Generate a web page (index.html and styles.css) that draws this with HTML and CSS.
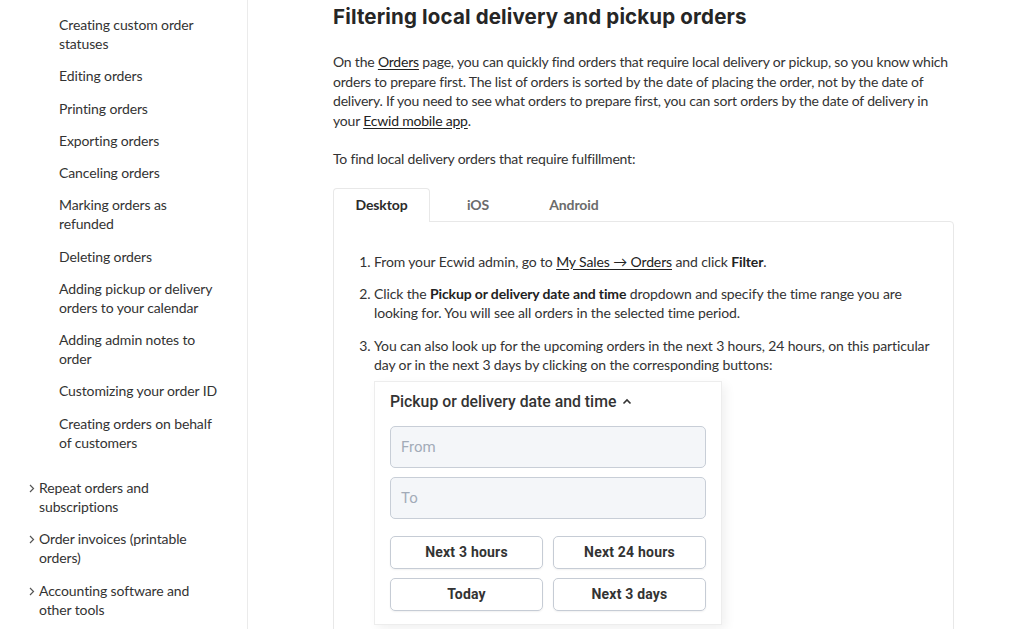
FILE: index.html
```html
<!DOCTYPE html>
<html>
<head>
<meta charset="utf-8">
<link rel="stylesheet" href="styles.css">
</head>
<body>
<div class="page">
  <aside class="sidebar">
    <ul class="sub">
      <li>Creating custom order statuses</li>
      <li>Editing orders</li>
      <li>Printing orders</li>
      <li>Exporting orders</li>
      <li>Canceling orders</li>
      <li>Marking orders as refunded</li>
      <li>Deleting orders</li>
      <li>Adding pickup or delivery orders to your calendar</li>
      <li>Adding admin notes to order</li>
      <li>Customizing your order ID</li>
      <li>Creating orders on behalf of customers</li>
    </ul>
    <ul class="top">
      <li><svg class="chev" width="6" height="9" viewBox="0 0 6 9"><path d="M1 1l3.5 3.5L1 8" fill="none" stroke="#555" stroke-width="1.2"/></svg><span>Repeat orders and subscriptions</span></li>
      <li><svg class="chev" width="6" height="9" viewBox="0 0 6 9"><path d="M1 1l3.5 3.5L1 8" fill="none" stroke="#555" stroke-width="1.2"/></svg><span>Order invoices (printable orders)</span></li>
      <li><svg class="chev" width="6" height="9" viewBox="0 0 6 9"><path d="M1 1l3.5 3.5L1 8" fill="none" stroke="#555" stroke-width="1.2"/></svg><span>Accounting software and other tools</span></li>
    </ul>
  </aside>
  <main class="main">
    <h2 class="title">Filtering local delivery and pickup orders</h2>
    <p class="para">On the <a class="link">Orders</a> page, you can quickly find orders that require local delivery or pickup, so you know which orders to prepare first. The list of orders is sorted by the date of placing the order, not by the date of delivery. If you need to see what orders to prepare first, you can sort orders by the date of delivery in your <a class="link">Ecwid mobile app</a>.</p>
    <p class="para">To find local delivery orders that require fulfillment:</p>
    <div class="tabs">
      <div class="tab active">Desktop</div>
      <div class="tab">iOS</div>
      <div class="tab">Android</div>
    </div>
    <div class="tabbox">
      <ol class="steps">
        <li>From your Ecwid admin, go to <a class="link">My Sales → Orders</a> and click <b>Filter</b>.</li>
        <li>Click the <b>Pickup or delivery date and time</b> dropdown and specify the time range you are looking for. You will see all orders in the selected time period.</li>
        <li>You can also look up for the upcoming orders in the next 3 hours, 24 hours, on this particular day or in the next 3 days by clicking on the corresponding buttons:
          <div class="shot">
            <div class="shot-head">Pickup or delivery date and time <svg width="10" height="7" viewBox="0 0 10 7"><path d="M1.5 5.5L5 2l3.5 3.5" fill="none" stroke="#333" stroke-width="1.6"/></svg></div>
            <div class="field">From</div>
            <div class="field">To</div>
            <div class="btns">
              <div class="btn">Next 3 hours</div>
              <div class="btn">Next 24 hours</div>
              <div class="btn">Today</div>
              <div class="btn">Next 3 days</div>
            </div>
          </div>
        </li>
      </ol>
    </div>
  </main>
</div>
</body>
</html>
```

FILE: styles.css
```css
html, body {
  margin: 0;
  padding: 0;
  background: #fff;
  overflow: hidden;
}
body {
  font-family: Lato, "Liberation Sans", sans-serif;
  font-size: 14px;
  color: #333;
  letter-spacing: -0.12px;
}
.page {
  display: flex;
  height: 629px;
}
.sidebar {
  width: 248px;
  flex: none;
  border-right: 1px solid #ebebeb;
  box-sizing: border-box;
  padding-top: 15px;
}
.sidebar ul {
  list-style: none;
  margin: 0;
  padding: 0;
}
.sub {
  padding-left: 59px !important;
  padding-right: 28px !important;
  display: flex;
  flex-direction: column;
  gap: 13.25px;
  line-height: 19px;
  margin-bottom: 26px !important;
}
.top {
  padding-left: 29px !important;
  padding-right: 40px !important;
  display: flex;
  flex-direction: column;
  gap: 13.5px;
  line-height: 19px;
}
.top li {
  display: flex;
  align-items: flex-start;
}
.chev {
  flex: none;
  margin-top: 6px;
  margin-right: 4px;
}
.main {
  padding-left: 85px;
  width: 621px;
  flex: none;
  letter-spacing: -0.2px;
}
.title {
  font-family: Inter, "Open Sans", sans-serif;
  font-weight: 700;
  font-size: 20.5px;
  line-height: 24px;
  margin: 5px 0 0;
  color: #262626;
  letter-spacing: 0.15px;
}
.para {
  margin: 23px 0 0;
  line-height: 19.5px;
}
.para + .para {
  margin-top: 19px;
}
.link {
  color: #222;
  text-decoration: underline;
  text-underline-offset: 2px;
}
.tabs {
  display: flex;
  gap: 14px;
  margin-top: 19px;
  height: 33px;
}
.tab {
  padding: 0 23px;
  line-height: 33px;
  font-weight: 700;
  color: #6b6b6b;
  box-sizing: border-box;
  letter-spacing: -0.1px;
}
.tab.active {
  color: #2b2b2b;
  border: 1px solid #e8e8e8;
  border-bottom: none;
  border-radius: 4px 4px 0 0;
  background: #fff;
  position: relative;
  z-index: 1;
  height: 34px;
  line-height: 32px;
  width: 97px;
  text-align: center;
  padding: 0;
}
.tabbox {
  border: 1px solid #e8e8e8;
  border-radius: 0 4px 4px 4px;
  padding: 30px 20px 40px 0;
  min-height: 400px;
}
.steps {
  margin: 0;
  padding-left: 40px;
  line-height: 19px;
  letter-spacing: -0.12px;
}
.steps li {
  margin-bottom: 13.5px;
}
.steps b {
  font-weight: 700;
  color: #222;
}
.shot {
  margin-top: 7px;
  width: 348px;
  box-sizing: border-box;
  border: 1px solid #ededed;
  box-shadow: 4px 4px 10px rgba(0,0,0,0.06);
  padding: 9px 15px 13px;
  font-family: Roboto, Inter, sans-serif;
  letter-spacing: 0;
}
.shot-head {
  font-size: 15.8px;
  font-weight: 500;
  color: #333;
  line-height: 22px;
  display: flex;
  align-items: center;
  gap: 6px;
  margin-bottom: 13px;
}
.field {
  height: 42px;
  box-sizing: border-box;
  border: 1px solid #c8ced7;
  border-radius: 5px;
  background: #f4f6f9;
  color: #a2abb8;
  font-size: 15px;
  line-height: 40px;
  padding-left: 10px;
  margin-bottom: 9px;
}
.btns {
  display: grid;
  grid-template-columns: 1fr 1fr;
  column-gap: 10px;
  row-gap: 9px;
  margin-top: 17px;
}
.btn {
  height: 33px;
  box-sizing: border-box;
  border: 1px solid #c6ccd5;
  border-radius: 5px;
  box-shadow: 0 1px 2px rgba(0,0,0,0.06);
  text-align: center;
  line-height: 31px;
  font-size: 14px;
  font-weight: 700;
  color: #333;
  letter-spacing: 0.2px;
}
```
